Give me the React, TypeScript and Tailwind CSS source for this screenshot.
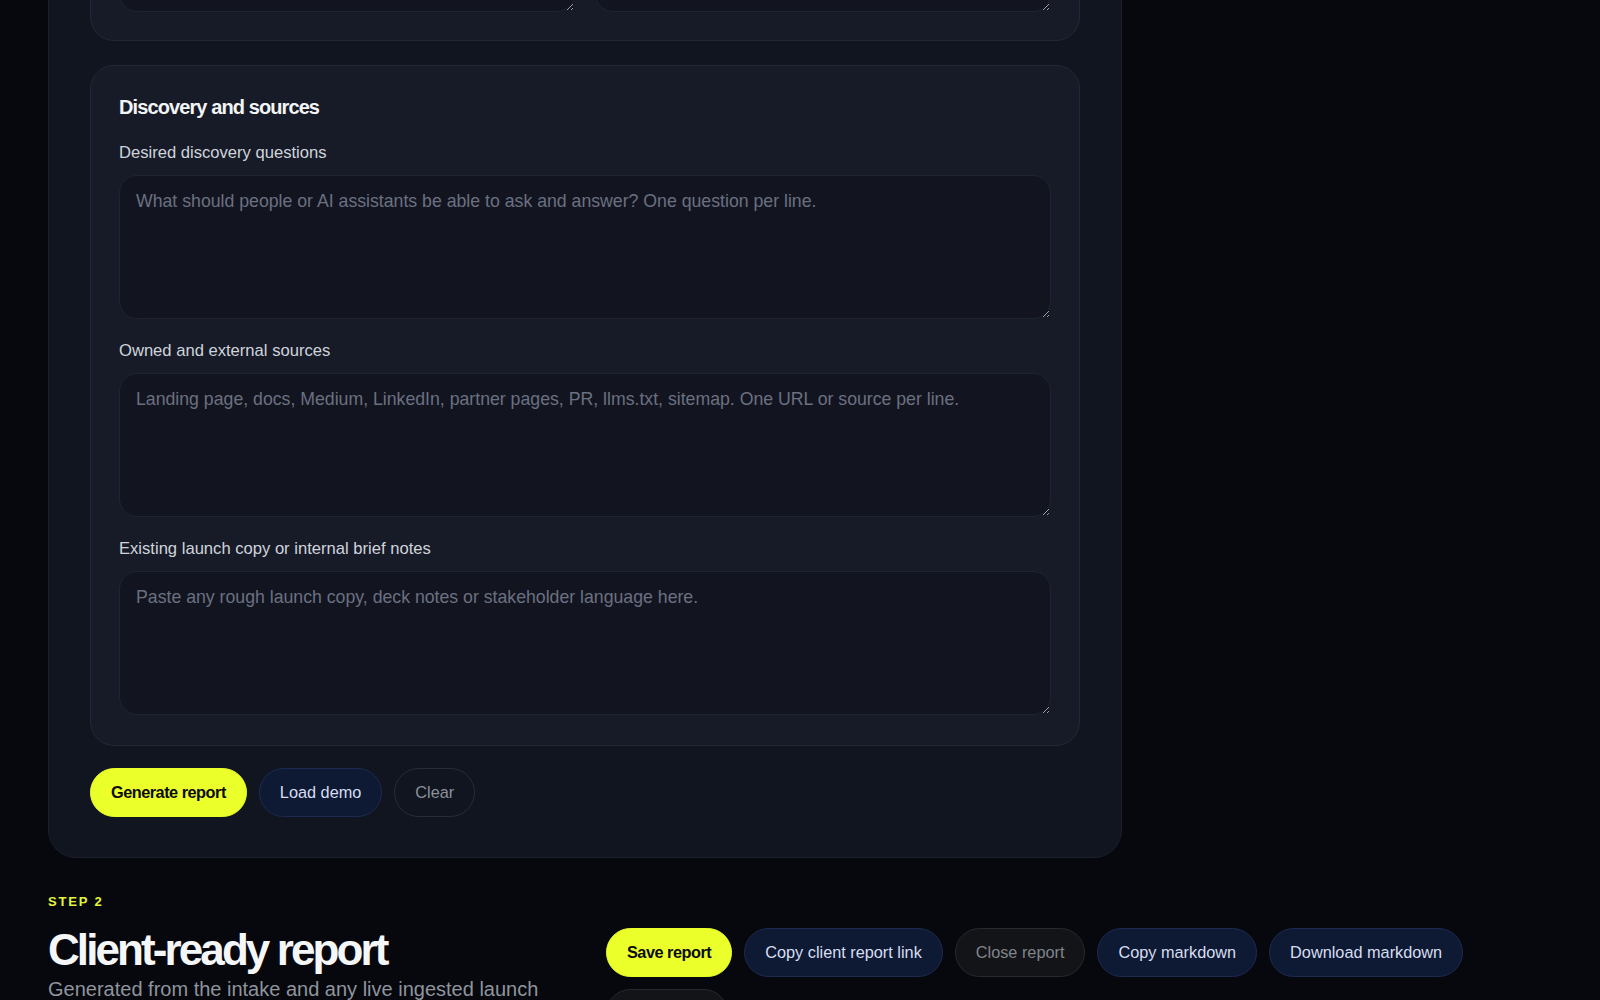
import React from 'react';

type Field = { label: string; placeholder: string };

const discoveryFields: Field[] = [
    {
        label: 'Desired discovery questions',
        placeholder: 'What should people or AI assistants be able to ask and answer? One question per line.',
    },
    {
        label: 'Owned and external sources',
        placeholder: 'Landing page, docs, Medium, LinkedIn, partner pages, PR, llms.txt, sitemap. One URL or source per line.',
    },
    {
        label: 'Existing launch copy or internal brief notes',
        placeholder: 'Paste any rough launch copy, deck notes or stakeholder language here.',
    },
];

const positioningFields: Field[] = [
    { label: 'Primary audience', placeholder: 'Who is this launch for?' },
    { label: 'Key differentiators', placeholder: 'What makes it different?' },
];

function TextField({ label, placeholder }: Field) {
    return (
        <label className="flex flex-col gap-2.5">
            <span className="text-[16.6px] leading-6 text-[#cfd4dc]">{label}</span>
            <textarea
                placeholder={placeholder}
                className="h-[144px] w-full rounded-[18px] border border-[#1f2432] bg-[#121520] px-4 py-3 text-[17.7px] leading-[26px] text-[#e5e7eb] placeholder:text-[#6b7080] outline-none [color-scheme:dark]"
            />
        </label>
    );
}

function Pill({ children, variant }: { children: React.ReactNode; variant: 'primary' | 'navy' | 'ghost' | 'muted' }) {
    const styles = {
        primary: 'bg-[#ebff2b] border-[#ebff2b] text-[#0b0b0b] font-bold tracking-[-0.03em]',
        navy: 'bg-[#0e1934] border-[#1d2b50] text-[#d6def0]',
        ghost: 'bg-transparent border-[#272c37] text-[#8b909a]',
        muted: 'bg-[#131418] border-[#26292f] text-[#80848c]',
    }[variant];
    return (
        <button className={`h-[49px] shrink-0 rounded-full border px-5 text-[16.3px] ${styles}`}>
            {children}
        </button>
    );
}

export default function App() {
    return (
        <div className="min-h-screen overflow-hidden bg-[#06080d] px-12 pb-24 font-['Liberation_Sans',Arial,sans-serif]">
            <div className="-mt-[283px]">
                {/* Intake form */}
                <div className="w-[1074px] rounded-[28px] border border-[#1b202c] bg-[#111520] px-[41px] pt-[41px] pb-[40px]">
                    <div className="flex flex-col gap-6">
                        <section className="rounded-3xl border border-[#222836] bg-[#171b27] px-7 pt-[26px] pb-7">
                            <h3 className="text-[20px] leading-7 font-bold tracking-[-0.045em] text-[#f3f4f6]">
                                Audience and positioning
                            </h3>
                            <div className="mt-5 grid grid-cols-2 gap-5">
                                {positioningFields.map((f) => (
                                    <TextField key={f.label} {...f} />
                                ))}
                            </div>
                        </section>

                        <section className="rounded-3xl border border-[#222836] bg-[#171b27] px-7 pt-[27px] pb-[30px]">
                            <h3 className="text-[20px] leading-7 font-bold tracking-[-0.045em] text-[#f3f4f6]">
                                Discovery and sources
                            </h3>
                            <div className="mt-5 flex flex-col gap-5">
                                {discoveryFields.map((f) => (
                                    <TextField key={f.label} {...f} />
                                ))}
                            </div>
                        </section>
                    </div>

                    <div className="mt-[22px] flex gap-3">
                        <Pill variant="primary">Generate report</Pill>
                        <Pill variant="navy">Load demo</Pill>
                        <Pill variant="ghost">Clear</Pill>
                    </div>
                </div>

                {/* Report header */}
                <div className="mt-[36px]">
                    <p className="mb-[18px] text-[13px] leading-4 font-bold tracking-[0.14em] text-[#e4f53a]">STEP 2</p>
                    <div className="flex items-start gap-12">
                        <div className="w-[510px] shrink-0">
                            <h2 className="text-[44px] leading-[44px] font-bold tracking-[-0.066em] text-[#f5f6f8]">
                                Client-ready report
                            </h2>
                            <p className="mt-[3px] max-w-[505px] text-[20px] leading-7 text-[#8f949d]">
                                Generated from the intake and any live ingested launch sources. Review before sharing.
                            </p>
                        </div>
                        <div className="flex flex-1 flex-wrap gap-3">
                            <Pill variant="primary">Save report</Pill>
                            <Pill variant="navy">Copy client report link</Pill>
                            <Pill variant="muted">Close report</Pill>
                            <Pill variant="navy">Copy markdown</Pill>
                            <Pill variant="navy">Download markdown</Pill>
                            <Pill variant="muted">Print / PDF</Pill>
                        </div>
                    </div>
                </div>
            </div>
        </div>
    );
}
